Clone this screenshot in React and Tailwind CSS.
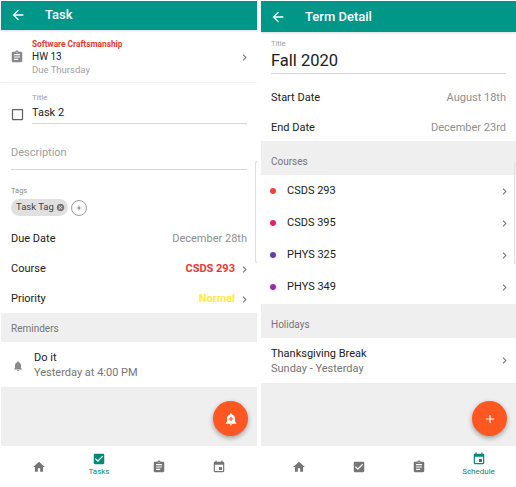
const PATHS = {
  back: 'M20 11H7.83l5.59-5.59L12 4l-8 8 8 8 1.41-1.41L7.83 13H20v-2z',
  assignment: 'M19 3h-4.18C14.4 1.84 13.3 1 12 1c-1.3 0-2.4.84-2.82 2H5c-1.1 0-2 .9-2 2v14c0 1.1.9 2 2 2h14c1.1 0 2-.9 2-2V5c0-1.1-.9-2-2-2zm-7 0c.55 0 1 .45 1 1s-.45 1-1 1-1-.45-1-1 .45-1 1-1zm2 14H7v-2h7v2zm3-4H7v-2h10v2zm0-4H7V7h10v2z',
  chevron: 'M10 6L8.59 7.41 13.17 12l-4.58 4.59L10 18l6-6z',
  blank: 'M19 5v14H5V5h14m0-2H5c-1.1 0-2 .9-2 2v14c0 1.1.9 2 2 2h14c1.1 0 2-.9 2-2V5c0-1.1-.9-2-2-2z',
  checked: 'M19 3H5c-1.11 0-2 .9-2 2v14c0 1.1.89 2 2 2h14c1.11 0 2-.9 2-2V5c0-1.1-.89-2-2-2zm-9 14l-5-5 1.41-1.41L10 14.17l7.59-7.59L19 8l-9 9z',
  bell: 'M12 22c1.1 0 2-.9 2-2h-4c0 1.1.89 2 2 2zm6-6v-5c0-3.07-1.64-5.64-4.5-6.32V4c0-.83-.67-1.5-1.5-1.5s-1.5.67-1.5 1.5v.68C7.63 5.36 6 7.92 6 11v5l-2 2v1h16v-1l-2-2z',
  addAlert: 'M10.01 21.01c0 1.1.89 1.99 1.99 1.99s1.99-.89 1.99-1.99h-3.98zm8.87-4.19V11c0-3.25-2.25-5.97-5.29-6.69v-.72C13.59 2.71 12.88 2 12 2s-1.59.71-1.59 1.59v.72C7.37 5.03 5.12 7.75 5.12 11v5.82L3 18.94V20h18v-1.06l-2.12-2.12zM16 13.01h-3v3h-2v-3H8V11h3V8h2v3h3v2.01z',
  home: 'M10 20v-6h4v6h5v-8h3L12 3 2 12h3v8z',
  event: 'M17 12h-5v5h5v-5zM16 1v2H8V1H6v2H5c-1.11 0-1.99.9-1.99 2L3 19c0 1.1.89 2 2 2h14c1.1 0 2-.9 2-2V5c0-1.1-.9-2-2-2h-1V1h-2zm3 18H5V8h14v11z',
  add: 'M19 13h-6v6h-2v-6H5v-2h6V5h2v6h6v2z',
  cancel: 'M12 2C6.47 2 2 6.47 2 12s4.47 10 10 10 10-4.47 10-10S17.53 2 12 2zm5 13.59L15.59 17 12 13.41 8.41 17 7 15.59 10.59 12 7 8.41 8.41 7 12 10.59 15.59 7 17 8.41 13.41 12 17 15.59z',
}

function Icon({ name, className }) {
  return (
    <svg viewBox="0 0 24 24" fill="currentColor" className={className}>
      <path d={PATHS[name]} />
    </svg>
  )
}

function Chevron({ className = '' }) {
  return <Icon name="chevron" className={`h-[13px] w-[13px] shrink-0 text-[#757575] ${className}`} />
}

function Header({ title, className }) {
  return (
    <div className={`flex shrink-0 items-center bg-[#009688] text-white shadow-[0_1px_2px_rgba(0,0,0,0.15)] ${className}`}>
      <Icon name="back" className="ml-[9px] h-[16px] w-[16px]" />
      <span className="ml-[19px] text-[13px] font-medium">{title}</span>
    </div>
  )
}

function Section({ title, className }) {
  return (
    <div className={`relative flex shrink-0 items-center bg-[#efefef] px-[10px] text-[10px] text-[#757575] ${className}`}>
      {title}
    </div>
  )
}

function DetailRow({ label, children }) {
  return (
    <div className="flex h-[30px] shrink-0 items-center justify-between px-[10px] text-[11px]">
      <span className="text-[#212121]">{label}</span>
      {children}
    </div>
  )
}

function Fab({ icon }) {
  return (
    <div className="absolute right-[9px] bottom-[51px] flex h-[35px] w-[35px] items-center justify-center rounded-full bg-[#ff5722] text-white shadow-[0_2px_5px_rgba(0,0,0,0.35)]">
      <Icon name={icon} className="h-[14px] w-[14px]" />
    </div>
  )
}

// faint edge of the sheet behind the screenshot
function EdgeMark({ className }) {
  return <div className={`absolute right-0 w-[2px] rounded-l-[3px] border-y border-l border-[#e0e0e0] ${className}`} />
}

const NAV = [
  { icon: 'home', label: '' },
  { icon: 'checked', label: 'Tasks' },
  { icon: 'assignment', label: '' },
  { icon: 'event', label: 'Schedule' },
]

function BottomNav({ active }) {
  return (
    <div className="flex h-[41px] shrink-0 justify-center bg-white">
      {NAV.map((item, i) => (
        <div key={item.icon} className="flex w-[60px] flex-col items-center justify-center">
          {i === active ? (
            <>
              <Icon name={item.icon} className="-mt-[5px] h-[14px] w-[14px] text-[#00897b]" />
              <span className="mt-[1px] text-[8px] leading-[10px] text-[#00897b]">{item.label}</span>
            </>
          ) : (
            <Icon name={item.icon} className="h-[14px] w-[14px] text-[#757575]" />
          )}
        </div>
      ))}
    </div>
  )
}

function TaskScreen() {
  return (
    <div className="relative flex h-[486px] w-[256px] flex-col bg-white">
      <Header title="Task" className="h-[29px] pb-[2px]" />
      <div className="flex h-[53px] shrink-0 items-center border-b border-[#f3f3f3] pt-[2px] pr-[6px] pl-[9px]">
        <Icon name="assignment" className="h-[14px] w-[14px] text-[#8a8a8a]" />
        <div className="ml-[8px] flex-1">
          <div className="text-[8.3px] leading-[11px] font-bold text-[#e53935]">Software Craftsmanship</div>
          <div className="text-[10px] leading-[14px] text-[#212121]">HW 13</div>
          <div className="text-[9.5px] leading-[12px] text-[#9e9e9e]">Due Thursday</div>
        </div>
        <Chevron />
      </div>

      <div className="mt-[10px] flex shrink-0 items-end pr-[10px] pl-[9px]">
        <Icon name="blank" className="mb-[2px] h-[15px] w-[15px] shrink-0 text-[#616161]" />
        <div className="ml-[7px] flex-1 border-b border-[#d6d6d6] pb-[3px]">
          <div className="text-[8px] leading-[10px] text-[#9e9e9e]">Title</div>
          <div className="mt-[3px] text-[11px] leading-[14px] text-[#212121]">Task 2</div>
        </div>
      </div>

      <div className="mx-[10px] mt-[21px] shrink-0 border-b border-[#d6d6d6] pb-[9px] text-[11px] leading-[15px] text-[#9e9e9e]">
        Description
      </div>

      <div className="mt-[16px] shrink-0 px-[10px] text-[7.5px] leading-[10px] text-[#8a8a8a]">Tags</div>
      <div className="mt-[3px] flex shrink-0 items-center px-[10px]">
        <div className="flex h-[17px] items-center rounded-full bg-[#e0e0e0] pr-[3px] pl-[5px] text-[9.5px] text-[#424242]">
          Task Tag
          <Icon name="cancel" className="ml-[2px] h-[9px] w-[9px] text-[#757575]" />
        </div>
        <div className="ml-[3px] flex h-[16px] w-[16px] items-center justify-center rounded-full border border-[#9e9e9e] text-[#424242]">
          <Icon name="add" className="h-[8px] w-[8px]" />
        </div>
      </div>

      <div className="mt-[8px] -mb-[1px]">
        <DetailRow label="Due Date">
          <span className="text-[#8f8f8f]">December 28th</span>
        </DetailRow>
        <DetailRow label="Course">
          <span className="flex items-center gap-[3px] font-bold text-[#e53935]">
            CSDS 293
            <Chevron className="-mr-[4px]" />
          </span>
        </DetailRow>
        <DetailRow label="Priority">
          <span className="flex items-center gap-[3px] font-bold text-[#ffeb3b]">
            Normal
            <Chevron className="-mr-[4px]" />
          </span>
        </DetailRow>
      </div>

      <Section title="Reminders" className="h-[29px] pt-[1px]" />
      <div className="flex h-[45px] shrink-0 items-center px-[11px]">
        <Icon name="bell" className="mt-[2px] h-[12px] w-[12px] text-[#8a8a8a]" />
        <div className="ml-[10px] text-[11px]">
          <div className="leading-[15px] text-[#212121]">Do it</div>
          <div className="leading-[15px] text-[#757575]">Yesterday at 4:00 PM</div>
        </div>
      </div>
      <div className="flex-1 bg-[#efefef]" />
      <BottomNav active={1} />
      <Fab icon="addAlert" />
      <EdgeMark className="top-[160px] h-[102px]" />
    </div>
  )
}

const COURSES = [
  { name: 'CSDS 293', dot: 'bg-[#f44336]' },
  { name: 'CSDS 395', dot: 'bg-[#e91e63]' },
  { name: 'PHYS 325', dot: 'bg-[#673ab7]' },
  { name: 'PHYS 349', dot: 'bg-[#9c27b0]' },
]

function TermScreen() {
  return (
    <div className="relative flex h-[486px] w-[255px] flex-col bg-white">
      <Header title="Term Detail" className="h-[31px]" />
      <div className="mx-[10px] mt-[7px] shrink-0 border-b border-[#d6d6d6] pb-[1px]">
        <div className="text-[7.5px] leading-[10px] text-[#9e9e9e]">Title</div>
        <div className="mt-[1px] text-[16.5px] leading-[22px] text-[#212121]">Fall 2020</div>
      </div>
      <div className="mt-[9px] -mb-[2px]">
        <DetailRow label="Start Date">
          <span className="text-[#8f8f8f]">August 18th</span>
        </DetailRow>
        <DetailRow label="End Date">
          <span className="text-[#8f8f8f]">December 23rd</span>
        </DetailRow>
      </div>
      <Section title="Courses" className="h-[34px] pt-[6px]" />
      <div className="shrink-0">
        {COURSES.map((course) => (
          <div key={course.name} className="flex h-[32px] items-center pr-[5px] pl-[9px]">
            <span className={`h-[6px] w-[6px] rounded-full ${course.dot}`} />
            <span className="mt-[1px] ml-[11px] flex-1 text-[11px] text-[#212121]">{course.name}</span>
            <Chevron />
          </div>
        ))}
      </div>
      <Section title="Holidays" className="mt-[1px] h-[34px] pt-[6px]" />
      <div className="flex h-[45px] shrink-0 items-center pr-[5px] pl-[10px]">
        <div className="flex-1 text-[11px]">
          <div className="leading-[15px] text-[#212121]">Thanksgiving Break</div>
          <div className="leading-[15px] text-[#757575]">Sunday - Yesterday</div>
        </div>
        <Chevron />
      </div>
      <div className="flex-1 bg-[#efefef]" />
      <BottomNav active={3} />
      <Fab icon="add" />
      <EdgeMark className="top-[162px] h-[101px]" />
    </div>
  )
}

export default function App() {
  return (
    <div className="flex h-[487px] w-[516px] gap-[4px] overflow-hidden bg-white pt-[1px] pl-[1px] font-['Roboto',sans-serif]">
      <TaskScreen />
      <TermScreen />
    </div>
  )
}
